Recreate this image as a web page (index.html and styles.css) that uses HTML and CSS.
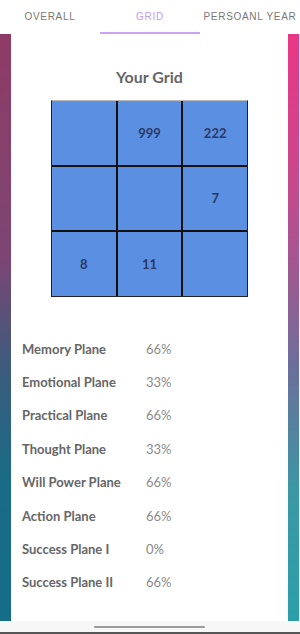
FILE: index.html
```html
<!DOCTYPE html>
<html lang="en">
<head>
    <meta charset="UTF-8">
    <meta name="viewport" content="width=device-width, initial-scale=1.0">
    <title>Your Grid</title>
    <link rel="stylesheet" href="styles.css">
</head>
<body>
    <div class="tabs">
        <div class="tab">OVERALL</div>
        <div class="tab active">GRID</div>
        <div class="tab">PERSOANL YEAR</div>
    </div>

    <div class="frame">
        <div class="edge edge-left"></div>
        <div class="card">
            <h2>Your Grid</h2>
            <div class="grid">
                <div class="cell"></div>
                <div class="cell">999</div>
                <div class="cell">222</div>
                <div class="cell"></div>
                <div class="cell"></div>
                <div class="cell">7</div>
                <div class="cell">8</div>
                <div class="cell">11</div>
                <div class="cell"></div>
            </div>

            <div class="planes">
                <div class="plane"><span class="name">Memory Plane</span><span class="value">66%</span></div>
                <div class="plane"><span class="name">Emotional Plane</span><span class="value">33%</span></div>
                <div class="plane"><span class="name">Practical Plane</span><span class="value">66%</span></div>
                <div class="plane"><span class="name">Thought Plane</span><span class="value">33%</span></div>
                <div class="plane"><span class="name">Will Power Plane</span><span class="value">66%</span></div>
                <div class="plane"><span class="name">Action Plane</span><span class="value">66%</span></div>
                <div class="plane"><span class="name">Success Plane I</span><span class="value">0%</span></div>
                <div class="plane"><span class="name">Success Plane II</span><span class="value">66%</span></div>
            </div>
        </div>
        <div class="edge edge-right"></div>
    </div>

    <div class="bottom-bar">
        <div class="home-indicator"></div>
    </div>
</body>
</html>
```

FILE: styles.css
```css
* {
    box-sizing: border-box;
    margin: 0;
    padding: 0;
}
body {
    width: 300px;
    height: 634px;
    overflow: hidden;
    background-color: #f7f7f7;
    font-family: Lato, "Open Sans", sans-serif;
    border-bottom: 2px solid #555;
}
.tabs {
    display: flex;
    height: 34px;
    background-color: #fff;
}
.tab {
    flex: 1;
    text-align: center;
    line-height: 34px;
    font-family: "Liberation Sans", Arial, sans-serif;
    font-size: 10px;
    letter-spacing: 0.7px;
    color: #777;
    white-space: nowrap;
}
.tab.active {
    color: #c49ce9;
    border-bottom: 2px solid #cca3f4;
}
.frame {
    display: flex;
    height: 587px;
}
.edge {
    width: 11px;
}
.edge-left {
    background: linear-gradient(to bottom, #8f3b66 0%, #7c4573 38%, #3e5b7c 56%, #1b6b85 75%, #156d87 100%);
}
.edge-right {
    width: 12px;
    border-right: 1px solid #f2f2f2;
    background: linear-gradient(to bottom, #ea3786 0%, #c8488c 25%, #9b5a92 42%, #6d6e9a 56%, #3c97a5 78%, #2c9fa9 100%);
}
.card {
    flex: 1;
    background-color: #fff;
    padding: 33px 11px 0 11px;
}
h2 {
    text-align: center;
    font-size: 16px;
    line-height: 20px;
    font-weight: bold;
    color: #666;
}
.grid {
    display: grid;
    grid-template-columns: repeat(3, 1fr);
    grid-template-rows: repeat(3, 1fr);
    gap: 2px;
    width: 197px;
    height: 197px;
    margin: 13px auto 0 auto;
    background-color: #111;
    border: 1px solid #222;
    border-top-color: #bbb;
}
.cell {
    display: flex;
    align-items: center;
    justify-content: center;
    background-color: #5b8fe2;
    color: #2a3a64;
    font-size: 13px;
    font-weight: bold;
}
.planes {
    margin-top: 35px;
}
.plane {
    display: flex;
    align-items: center;
    height: 33.4px;
    font-size: 13px;
}
.name {
    width: 124px;
    font-weight: bold;
    color: #666;
}
.value {
    color: #8a8a8a;
}
.bottom-bar {
    height: 11px;
    padding-top: 5px;
}
.home-indicator {
    width: 111px;
    height: 2px;
    margin-left: 94px;
    border-radius: 1px;
    background-color: #9a9a9a;
}
```
